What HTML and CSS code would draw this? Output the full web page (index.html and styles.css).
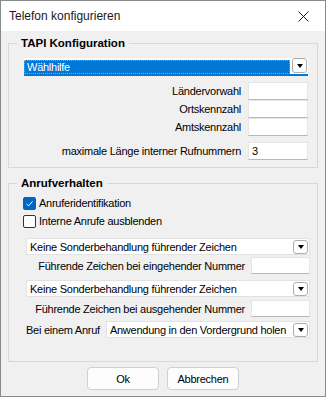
FILE: index.html
```html
<!DOCTYPE html>
<html lang="de">
<head>
    <meta charset="UTF-8">
    <title>Telefon konfigurieren</title>
    <link rel="stylesheet" href="styles.css">
</head>
<body>
    <div class="window">
        <div class="titlebar">
            <span class="title">Telefon konfigurieren</span>
            <svg class="close" width="11" height="11" viewBox="0 0 11 11">
                <path d="M0.5 0.5 L10.5 10.5 M10.5 0.5 L0.5 10.5" stroke="#1a1a1a" stroke-width="1" fill="none"/>
            </svg>
        </div>

        <div class="dialog">
            <!-- TAPI -->
            <fieldset class="group">
                <legend>TAPI Konfiguration</legend>
                <div class="group-body tapi">
                    <div class="combo focused">
                        <span class="combo-value">Wählhilfe</span>
                        <span class="combo-btn"><span class="arrow"></span></span>
                    </div>
                    <div class="field-row first">
                        <span class="label">Ländervorwahl</span>
                        <div class="edit"></div>
                    </div>
                    <div class="field-row">
                        <span class="label">Ortskennzahl</span>
                        <div class="edit"></div>
                    </div>
                    <div class="field-row">
                        <span class="label">Amtskennzahl</span>
                        <div class="edit"></div>
                    </div>
                    <div class="field-row spaced">
                        <span class="label">maximale Länge interner Rufnummern</span>
                        <div class="edit">3</div>
                    </div>
                </div>
            </fieldset>

            <!-- Anrufverhalten -->
            <fieldset class="group second">
                <legend>Anrufverhalten</legend>
                <div class="group-body calls">
                    <div class="check-row first">
                        <span class="checkbox checked">
                            <svg width="13" height="13" viewBox="0 0 13 13">
                                <path d="M3.5 6.8 L5.6 8.8 L9.6 4.3" stroke="#fff" stroke-width="1" fill="none"/>
                            </svg>
                        </span>
                        <span>Anruferidentifikation</span>
                    </div>
                    <div class="check-row">
                        <span class="checkbox"></span>
                        <span>Interne Anrufe ausblenden</span>
                    </div>

                    <div class="combo plain first-combo">
                        <span class="combo-text">Keine Sonderbehandlung führender Zeichen</span>
                        <span class="combo-btn"><span class="arrow"></span></span>
                    </div>
                    <div class="lead-row">
                        <span class="label">Führende Zeichen bei eingehender Nummer</span>
                        <div class="edit small"></div>
                    </div>

                    <div class="combo plain next-combo">
                        <span class="combo-text">Keine Sonderbehandlung führender Zeichen</span>
                        <span class="combo-btn"><span class="arrow"></span></span>
                    </div>
                    <div class="lead-row">
                        <span class="label">Führende Zeichen bei ausgehender Nummer</span>
                        <div class="edit small"></div>
                    </div>

                    <div class="call-row">
                        <span class="label">Bei einem Anruf</span>
                        <div class="combo plain grow">
                            <span class="combo-text">Anwendung in den Vordergrund holen</span>
                            <span class="combo-btn"><span class="arrow"></span></span>
                        </div>
                    </div>
                </div>
            </fieldset>

            <div class="buttons">
                <button class="btn">Ok</button>
                <button class="btn">Abbrechen</button>
            </div>
        </div>
    </div>
</body>
</html>
```

FILE: styles.css
```css
* {
    box-sizing: border-box;
}
body {
    margin: 0;
    background: #fff;
    font-family: "Liberation Sans", Arial, sans-serif;
    font-size: 11px;
    letter-spacing: -0.25px;
    color: #000;
}
.window {
    width: 326px;
    height: 397px;
    border: 1px solid #8a8a8a;
    background: #f0f0f0;
    display: flex;
    flex-direction: column;
}
.titlebar {
    height: 30px;
    flex: none;
    background: #fff;
    display: flex;
    align-items: center;
    justify-content: space-between;
    padding: 0 16px 0 8px;
}
.title {
    font-size: 12px;
    line-height: 14px;
    letter-spacing: 0;
    color: #1a1a1a;
}
.close {
    display: block;
}
.dialog {
    flex: 1;
    padding: 6px 7px 0;
}
.group {
    margin: 0;
    padding: 0;
    min-width: 0;
    border: 1px solid #d8d8d8;
}
.group.second {
    margin-top: 9px;
}
legend {
    margin-left: 8px;
    padding: 0 4px;
    font-weight: bold;
    font-size: 11.5px;
    line-height: 13px;
    letter-spacing: 0;
}
.group-body.tapi {
    padding: 8px 9px 7px 15px;
}
.group-body.calls {
    padding: 4px 7px 23px 17px;
}

/* combos */
.combo {
    display: flex;
    background: #fff;
}
.combo.focused {
    height: 18px;
    align-items: flex-start;
    padding-right: 1px;
    border-bottom: 2px solid #0078d7;
}
.combo-value {
    flex: 1;
    height: 14px;
    margin: 2px 2px 0 0;
    padding-left: 2px;
    line-height: 12px;
    background: #0078d7;
    color: #fff;
    border: 1px dotted #e0902a;
}
.combo.plain {
    height: 17px;
    align-items: center;
    padding: 0 1px 0 3px;
    border: 1px solid #e2e2e2;
}
.combo-text {
    flex: 1;
    white-space: nowrap;
    overflow: hidden;
}
.combo-btn {
    flex: none;
    width: 15px;
    height: 14px;
    display: flex;
    align-items: center;
    justify-content: center;
    background: #fff;
    border: 1px solid #adadad;
    border-radius: 3px;
}
.focused .combo-btn {
    height: 15px;
}
.arrow {
    width: 0;
    height: 0;
    border-left: 3.5px solid transparent;
    border-right: 3.5px solid transparent;
    border-top: 4px solid #000;
    margin-top: 1px;
}

/* edit rows */
.field-row {
    display: flex;
    justify-content: flex-end;
    align-items: center;
    gap: 7px;
    height: 18px;
}
.field-row.first {
    margin-top: 6px;
}
.field-row.spaced {
    margin-top: 6px;
}
.edit {
    width: 60px;
    height: 18px;
    padding-left: 3px;
    line-height: 16px;
    background: #fff;
    border: 1px solid #e6e6e6;
    border-bottom-color: #b8b8b8;
}
.edit.small {
    width: 59px;
    height: 17px;
    line-height: 15px;
}

/* checkboxes */
.check-row {
    display: flex;
    align-items: center;
    gap: 3px;
    height: 18px;
    margin-left: -3px;
}
.checkbox {
    width: 13px;
    height: 13px;
    flex: none;
    border: 1px solid #333;
    border-radius: 2px;
    background: #fff;
}
.checkbox.checked {
    border-color: #0067c0;
    background: #0067c0;
}
.checkbox svg {
    display: block;
    margin: -1px;
}
.first-combo {
    margin-top: 8px;
}
.next-combo {
    margin-top: 6px;
}
.lead-row {
    display: flex;
    justify-content: flex-end;
    align-items: center;
    gap: 6px;
    height: 17px;
    margin-top: 2px;
}
.lead-row + .next-combo {
    margin-top: 6px;
}
.next-combo + .lead-row {
    margin-top: 3px;
}
.call-row {
    display: flex;
    align-items: center;
    gap: 6px;
    margin-top: 4px;
}
.combo.grow {
    flex: 1;
}

/* buttons */
.buttons {
    display: flex;
    justify-content: center;
    gap: 8px;
    margin-top: 5px;
}
.btn {
    width: 72px;
    height: 23px;
    padding: 0;
    font-family: inherit;
    font-size: 11px;
    letter-spacing: -0.25px;
    color: #000;
    background: #fdfdfd;
    border: 1px solid #d0d0d0;
    border-radius: 4px;
}
```
